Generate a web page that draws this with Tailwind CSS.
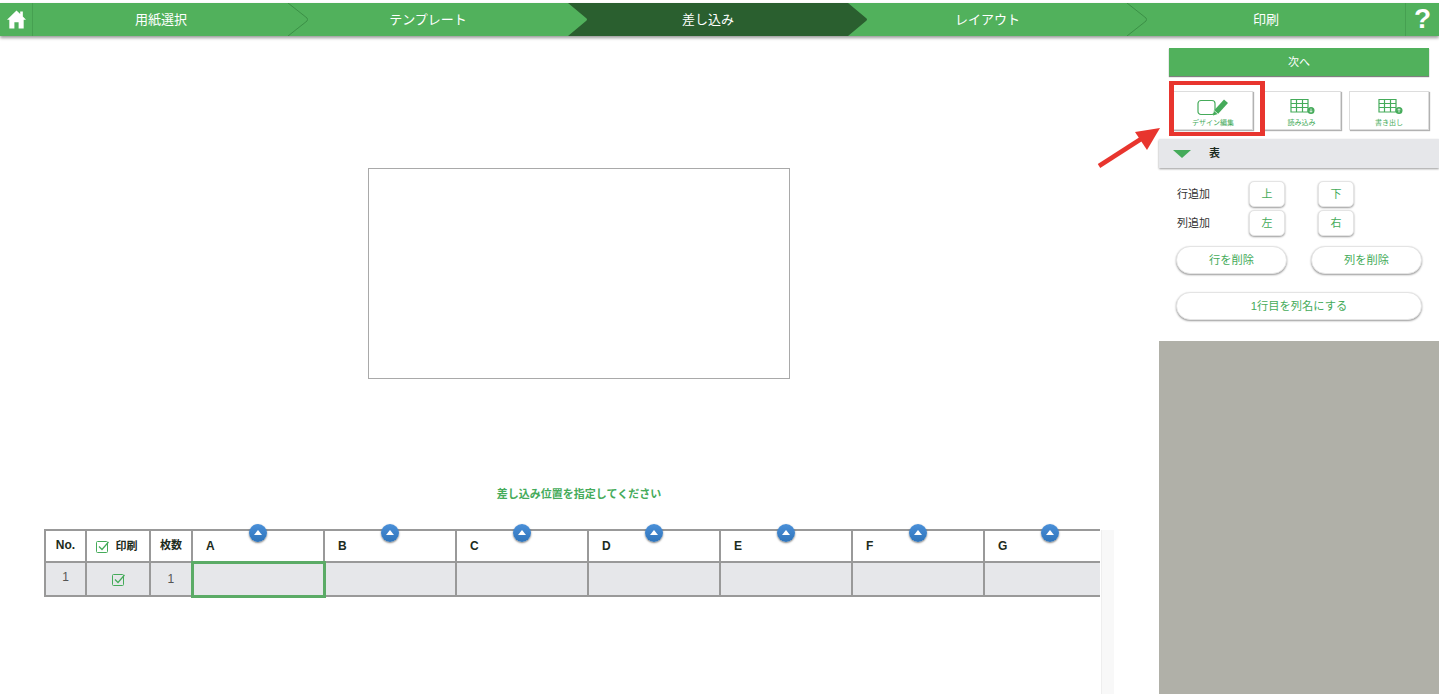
<!DOCTYPE html>
<html lang="ja">
<head>
    <meta charset="UTF-8">
    <meta name="viewport" content="width=device-width, initial-scale=1.0">
    <title>差し込み</title>
    <script src="https://cdn.jsdelivr.net/npm/@tailwindcss/browser@4"></script>
</head>
<body class="relative h-[694px] w-[1439px] overflow-hidden bg-white font-['Liberation_Sans','Noto_Sans_CJK_JP',sans-serif] text-[#1c2b20]">
    <!-- step bar -->
    <header class="relative z-10 mt-[3px] flex h-[33px] bg-[#51b15c] text-[13px] text-white shadow-[0_2px_3px_rgba(0,0,0,0.4)]">
        <div class="flex w-[33px] items-center justify-center border-r border-[#46a051]">
            <svg class="h-[19px] w-[19px]" viewBox="0 0 18 18"><path fill="#fff" d="M9 0.5 L12.5 3.8 L12.5 1.5 L15 1.5 L15 6.2 L18 9.2 L15.8 9.2 L15.8 17.5 L11 17.5 L11 11.5 L7 11.5 L7 17.5 L2.2 17.5 L2.2 9.2 L0 9.2 Z"/></svg>
        </div>
        <div class="relative ml-px flex w-[254px] items-center justify-center">用紙選択
            <svg class="absolute left-full top-0 z-10 h-[33px] w-[21px]" viewBox="0 0 21 33"><path d="M0 0 L19 15 Q20 16.5 19 18 L0 33" fill="#51b15c" stroke="#3c8f47"/></svg>
        </div>
        <div class="flex w-[280px] items-center justify-center">テンプレート</div>
        <div class="relative flex w-[280px] items-center justify-center bg-[#2a5f2f]">差し込み
            <svg class="absolute left-0 top-0 h-[33px] w-[20px]" viewBox="0 0 20 33"><path d="M0 0 L18 15 Q20 16.5 18 18 L0 33 Z" fill="#51b15c"/></svg>
            <svg class="absolute left-full top-0 z-10 h-[33px] w-[20px]" viewBox="0 0 20 33"><path d="M0 0 L18 15 Q20 16.5 18 18 L0 33 Z" fill="#2a5f2f"/></svg>
        </div>
        <div class="relative flex w-[279px] items-center justify-center">レイアウト
            <svg class="absolute left-full top-0 z-10 h-[33px] w-[21px]" viewBox="0 0 21 33"><path d="M0 0 L19 15 Q20 16.5 19 18 L0 33" fill="#51b15c" stroke="#3c8f47"/></svg>
        </div>
        <div class="flex w-[278px] items-center justify-center">印刷</div>
        <div class="flex flex-1 items-center justify-center border-l border-[#46a051] pb-px text-[28px] font-bold leading-none">?</div>
    </header>

    <main class="flex h-[658px]">
        <!-- preview and data table -->
        <section class="relative w-[1159px] pl-[44px] pt-[132px]">
            <div class="ml-[324px] h-[211px] w-[422px] border border-[#a9a9a9]"></div>
            <p class="mt-[108px] w-[1070px] text-center text-[11px] font-bold leading-[14px] text-[#45ab5a]">差し込み位置を指定してください</p>
            <div class="relative mt-[21px] w-[1056px] overflow-hidden pt-[7px]">
                <table class="w-[1071px] table-fixed border-collapse text-[12px]">
                    <colgroup>
                        <col class="w-[41px]"><col class="w-[64px]"><col class="w-[42px]">
                        <col class="w-[132px]"><col class="w-[132px]"><col class="w-[132px]"><col class="w-[132px]"><col class="w-[132px]"><col class="w-[132px]"><col class="w-[132px]">
                    </colgroup>
                    <thead>
                        <tr class="h-[32px] font-bold">
                            <th class="border-2 border-[#999] pb-[2px]">No.</th>
                            <th class="border-2 border-[#999] text-[11px]">
                                <span class="flex items-center justify-center gap-[7px] pr-[3px]">
                                    <svg class="h-[13px] w-[13px]" viewBox="0 0 13 13" fill="none" stroke="#45ab5a"><rect x="0.5" y="1.5" width="11" height="11" rx="1"/><path d="M3 6.5 L6 9.5 L12.5 2" stroke-width="1.2"/></svg>印刷
                                </span>
                            </th>
                            <th class="border-2 border-[#999] pb-[2px] text-[11px]">枚数</th>
                            <th class="relative border-2 border-[#999] pl-[13px] text-left">A</th>
                            <th class="border-2 border-[#999] pl-[13px] text-left">B</th>
                            <th class="border-2 border-[#999] pl-[13px] text-left">C</th>
                            <th class="border-2 border-[#999] pl-[13px] text-left">D</th>
                            <th class="border-2 border-[#999] pl-[13px] text-left">E</th>
                            <th class="border-2 border-[#999] pl-[13px] text-left">F</th>
                            <th class="border-2 border-[#999] pl-[13px] text-left">G</th>
                        </tr>
                    </thead>
                    <tbody>
                        <tr class="h-[34px] bg-[#e6e7ea] text-center text-[#555]">
                            <td class="border-2 border-[#999] pb-1">1</td>
                            <td class="border-2 border-[#999]">
                                <svg class="mx-auto h-[13px] w-[13px]" viewBox="0 0 13 13" fill="none" stroke="#45ab5a"><rect x="0.5" y="1.5" width="11" height="11" rx="1"/><path d="M3 6.5 L6 9.5 L12.5 2" stroke-width="1.2"/></svg>
                            </td>
                            <td class="border-2 border-[#999]">1</td>
                            <td class="border-[3px] border-[#5bab66]"></td>
                            <td class="border-2 border-[#999]"></td>
                            <td class="border-2 border-[#999]"></td>
                            <td class="border-2 border-[#999]"></td>
                            <td class="border-2 border-[#999]"></td>
                            <td class="border-2 border-[#999]"></td>
                            <td class="border-2 border-[#999]"></td>
                        </tr>
                    </tbody>
                </table>
                <!-- column move handles -->
                <span class="absolute left-[205px] top-[2px] flex h-[18px] w-[18px] items-center justify-center rounded-full bg-linear-to-b from-[#4a90d9] to-[#2f74ba] pb-[2px] shadow-[0_1px_2px_rgba(0,0,0,0.5)]"><i class="border-x-[4px] border-b-[5px] border-x-transparent border-b-white"></i></span>
                <span class="absolute left-[337px] top-[2px] flex h-[18px] w-[18px] items-center justify-center rounded-full bg-linear-to-b from-[#4a90d9] to-[#2f74ba] pb-[2px] shadow-[0_1px_2px_rgba(0,0,0,0.5)]"><i class="border-x-[4px] border-b-[5px] border-x-transparent border-b-white"></i></span>
                <span class="absolute left-[469px] top-[2px] flex h-[18px] w-[18px] items-center justify-center rounded-full bg-linear-to-b from-[#4a90d9] to-[#2f74ba] pb-[2px] shadow-[0_1px_2px_rgba(0,0,0,0.5)]"><i class="border-x-[4px] border-b-[5px] border-x-transparent border-b-white"></i></span>
                <span class="absolute left-[601px] top-[2px] flex h-[18px] w-[18px] items-center justify-center rounded-full bg-linear-to-b from-[#4a90d9] to-[#2f74ba] pb-[2px] shadow-[0_1px_2px_rgba(0,0,0,0.5)]"><i class="border-x-[4px] border-b-[5px] border-x-transparent border-b-white"></i></span>
                <span class="absolute left-[733px] top-[2px] flex h-[18px] w-[18px] items-center justify-center rounded-full bg-linear-to-b from-[#4a90d9] to-[#2f74ba] pb-[2px] shadow-[0_1px_2px_rgba(0,0,0,0.5)]"><i class="border-x-[4px] border-b-[5px] border-x-transparent border-b-white"></i></span>
                <span class="absolute left-[865px] top-[2px] flex h-[18px] w-[18px] items-center justify-center rounded-full bg-linear-to-b from-[#4a90d9] to-[#2f74ba] pb-[2px] shadow-[0_1px_2px_rgba(0,0,0,0.5)]"><i class="border-x-[4px] border-b-[5px] border-x-transparent border-b-white"></i></span>
                <span class="absolute left-[997px] top-[2px] flex h-[18px] w-[18px] items-center justify-center rounded-full bg-linear-to-b from-[#4a90d9] to-[#2f74ba] pb-[2px] shadow-[0_1px_2px_rgba(0,0,0,0.5)]"><i class="border-x-[4px] border-b-[5px] border-x-transparent border-b-white"></i></span>
            </div>
            <!-- scrollbar track -->
            <div class="absolute bottom-0 left-[1101px] top-[494px] w-[13px] border-l border-[#eee] bg-[#f8f8f8]"></div>
        </section>

        <!-- right tool panel -->
        <aside class="flex w-[280px] flex-col bg-[#b0b0a8]">
            <div class="h-[305px] bg-white">
                <div class="px-[10px] pt-[12px]">
                    <button class="flex h-[28px] w-[260px] items-center justify-center bg-[#51b15c] text-[11px] text-white shadow-[0_1px_1px_rgba(0,0,0,0.5)]">次へ</button>
                    <div class="mt-[15px] flex h-[39px]">
                        <button class="ml-[4px] flex w-[80px] flex-col items-center border border-[#ddd] bg-white pt-[6px] text-[7px] leading-[9px] text-[#45ab5a] shadow-[1px_1px_1px_rgba(0,0,0,0.3)]">
                            <svg class="mb-[1px] h-[19px] w-[32px]" viewBox="0 0 32 19" fill="none"><rect x="1" y="2.5" width="17" height="14" rx="3" stroke="#45ab5a" stroke-width="1.2"/><path d="M16 17.5 L17 12.5 L27 1.5 L31 5 L21 16 Z" fill="#45ab5a"/><path d="M17 12.5 L21 16" stroke="#fff" stroke-width="0.8"/></svg>デザイン編集
                        </button>
                        <button class="ml-[9px] flex w-[79px] flex-col items-center border border-[#ddd] bg-white pt-[6px] text-[7px] leading-[9px] text-[#45ab5a] shadow-[1px_1px_1px_rgba(0,0,0,0.3)]">
                            <svg class="mb-[1px] ml-[3px] h-[19px] w-[26px]" viewBox="0 0 26 19" fill="none" stroke="#45ab5a" stroke-width="1.2"><path d="M1 1.5 H18 V14 H1 Z M1 5.5 H18 M1 9.5 H18 M6.5 1.5 V14 M12.5 1.5 V14"/><circle cx="21" cy="12.5" r="3.5" fill="#45ab5a" stroke="none"/><path d="M21 10.5 V14 M19.5 12.8 L21 14.3 L22.5 12.8" stroke="#fff" stroke-width="0.8"/></svg>読み込み
                        </button>
                        <button class="ml-[8px] flex w-[80px] flex-col items-center border border-[#ddd] bg-white pt-[6px] text-[7px] leading-[9px] text-[#45ab5a] shadow-[1px_1px_1px_rgba(0,0,0,0.3)]">
                            <svg class="mb-[1px] ml-[3px] h-[19px] w-[26px]" viewBox="0 0 26 19" fill="none" stroke="#45ab5a" stroke-width="1.2"><path d="M1 1.5 H18 V14 H1 Z M1 5.5 H18 M1 9.5 H18 M6.5 1.5 V14 M12.5 1.5 V14"/><circle cx="21" cy="12.5" r="3.5" fill="#45ab5a" stroke="none"/><path d="M21 14.5 V11 M19.5 12.2 L21 10.7 L22.5 12.2" stroke="#fff" stroke-width="0.8"/></svg>書き出し
                        </button>
                    </div>
                </div>
                <div class="mt-[9px] flex h-[29px] items-center bg-[#e6e7ea] pl-[14px] shadow-[0_1px_2px_rgba(0,0,0,0.4)]">
                    <i class="border-x-[9px] border-t-[8px] border-x-transparent border-t-[#45ab5a]"></i>
                    <span class="ml-[18px] text-[11px] font-bold">表</span>
                </div>
                <div class="px-[17px] pt-[13px] text-[11px]">
                    <div class="flex h-[26px] items-center">
                        <span class="w-[73px] pl-px text-[#333]">行追加</span>
                        <button class="h-[26px] w-[36px] rounded-[5px] border border-[#e4e4e4] bg-white text-[#45ab5a] shadow-[0_1px_2px_rgba(0,0,0,0.4)]">上</button>
                        <button class="ml-[33px] h-[26px] w-[36px] rounded-[5px] border border-[#e4e4e4] bg-white text-[#45ab5a] shadow-[0_1px_2px_rgba(0,0,0,0.4)]">下</button>
                    </div>
                    <div class="mt-[3px] flex h-[26px] items-center">
                        <span class="w-[73px] pl-px text-[#333]">列追加</span>
                        <button class="h-[26px] w-[36px] rounded-[5px] border border-[#e4e4e4] bg-white text-[#45ab5a] shadow-[0_1px_2px_rgba(0,0,0,0.4)]">左</button>
                        <button class="ml-[33px] h-[26px] w-[36px] rounded-[5px] border border-[#e4e4e4] bg-white text-[#45ab5a] shadow-[0_1px_2px_rgba(0,0,0,0.4)]">右</button>
                    </div>
                    <div class="mt-[10px] flex justify-between text-[11.25px]">
                        <button class="h-[28px] w-[111px] rounded-full border border-[#e4e4e4] bg-white text-[#45ab5a] shadow-[0_1px_2px_rgba(0,0,0,0.4)]">行を削除</button>
                        <button class="h-[28px] w-[111px] rounded-full border border-[#e4e4e4] bg-white text-[#45ab5a] shadow-[0_1px_2px_rgba(0,0,0,0.4)]">列を削除</button>
                    </div>
                    <button class="mt-[18px] h-[28px] w-[246px] rounded-full border border-[#e4e4e4] bg-white text-[11.25px] text-[#45ab5a] shadow-[0_1px_2px_rgba(0,0,0,0.4)]">1行目を列名にする</button>
                </div>
            </div>
        </aside>
    </main>

    <!-- red callout annotation -->
    <div class="absolute left-[1169px] top-[81px] z-20 h-[55px] w-[96px] border-x-[5px] border-y-[4px] border-[#e8352e]"></div>
    <svg class="absolute left-[1095px] top-[124px] z-20 h-[46px] w-[68px]" viewBox="0 0 68 46"><path d="M4 42 L46 15" stroke="#e8352e" stroke-width="4.5"/><path d="M65 4 L40 8 L52 26 Z" fill="#e8352e"/></svg>
</body>
</html>
